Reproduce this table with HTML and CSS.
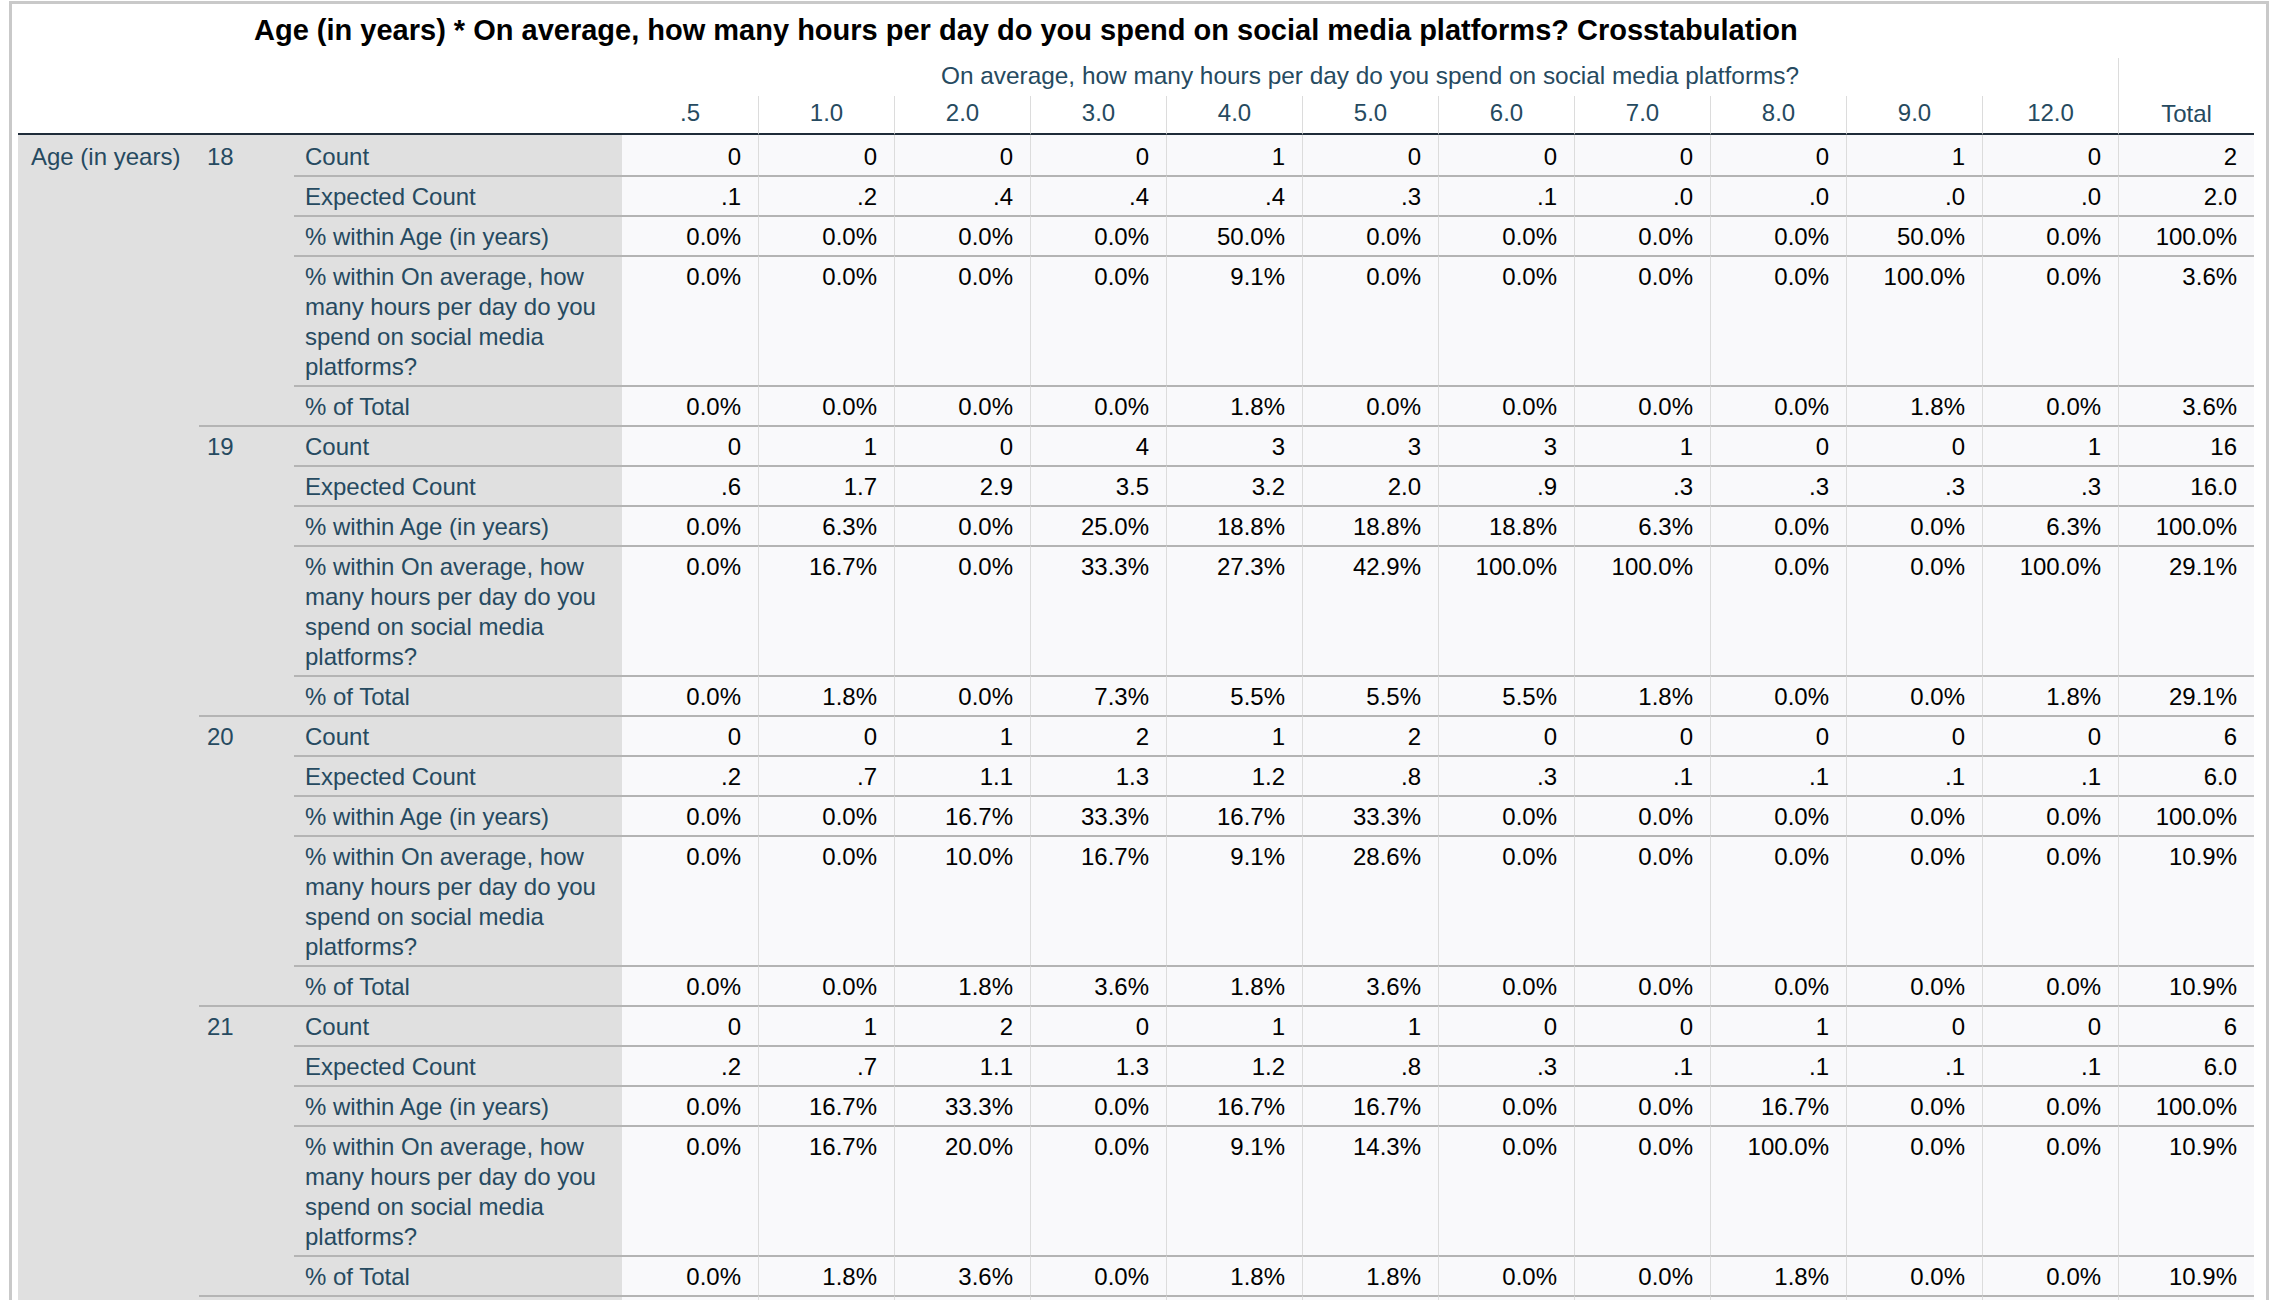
FILE: index.html
```html
<!DOCTYPE html>
<html lang="en">
<head>
<meta charset="utf-8">
<title>Crosstabulation</title>
<link rel="stylesheet" href="styles.css">
</head>
<body>
<div class="frame">
  <div class="title">Age (in years) * On average, how many hours per day do you spend on social media platforms? Crosstabulation</div>
  <table class="xt">
    <colgroup>
      <col class="c-var"><col class="c-age"><col class="c-stat">
      <col class="c-num"><col class="c-num"><col class="c-num"><col class="c-num"><col class="c-num"><col class="c-num">
      <col class="c-num"><col class="c-num"><col class="c-num"><col class="c-num"><col class="c-num"><col class="c-num">
    </colgroup>
    <thead>
      <tr class="h1">
        <th colspan="3" class="blank"></th>
        <th colspan="11" class="span">On average, how many hours per day do you spend on social media platforms?</th>
        <th rowspan="2" class="tot">Total</th>
      </tr>
      <tr class="h2">
        <th colspan="3" class="blank"></th>
        <th class="num">.5</th><th class="num">1.0</th><th class="num">2.0</th><th class="num">3.0</th><th class="num">4.0</th><th class="num">5.0</th>
        <th class="num">6.0</th><th class="num">7.0</th><th class="num">8.0</th><th class="num">9.0</th><th class="num">12.0</th>
      </tr>
    </thead>
    <tbody>
      <tr class="first">
        <th rowspan="21" class="var">Age (in years)</th>
        <th rowspan="5" class="age">18</th>
        <th class="stat">Count</th>
        <td>0</td><td>0</td><td>0</td><td>0</td><td>1</td><td>0</td><td>0</td><td>0</td><td>0</td><td>1</td><td>0</td><td>2</td>
      </tr>
      <tr>
        <th class="stat">Expected Count</th>
        <td>.1</td><td>.2</td><td>.4</td><td>.4</td><td>.4</td><td>.3</td><td>.1</td><td>.0</td><td>.0</td><td>.0</td><td>.0</td><td>2.0</td>
      </tr>
      <tr>
        <th class="stat">% within Age (in years)</th>
        <td>0.0%</td><td>0.0%</td><td>0.0%</td><td>0.0%</td><td>50.0%</td><td>0.0%</td><td>0.0%</td><td>0.0%</td><td>0.0%</td><td>50.0%</td><td>0.0%</td><td>100.0%</td>
      </tr>
      <tr>
        <th class="stat">% within On average, how many hours per day do you spend on social media platforms?</th>
        <td>0.0%</td><td>0.0%</td><td>0.0%</td><td>0.0%</td><td>9.1%</td><td>0.0%</td><td>0.0%</td><td>0.0%</td><td>0.0%</td><td>100.0%</td><td>0.0%</td><td>3.6%</td>
      </tr>
      <tr>
        <th class="stat">% of Total</th>
        <td>0.0%</td><td>0.0%</td><td>0.0%</td><td>0.0%</td><td>1.8%</td><td>0.0%</td><td>0.0%</td><td>0.0%</td><td>0.0%</td><td>1.8%</td><td>0.0%</td><td>3.6%</td>
      </tr>

      <tr>
        <th rowspan="5" class="age">19</th>
        <th class="stat">Count</th>
        <td>0</td><td>1</td><td>0</td><td>4</td><td>3</td><td>3</td><td>3</td><td>1</td><td>0</td><td>0</td><td>1</td><td>16</td>
      </tr>
      <tr>
        <th class="stat">Expected Count</th>
        <td>.6</td><td>1.7</td><td>2.9</td><td>3.5</td><td>3.2</td><td>2.0</td><td>.9</td><td>.3</td><td>.3</td><td>.3</td><td>.3</td><td>16.0</td>
      </tr>
      <tr>
        <th class="stat">% within Age (in years)</th>
        <td>0.0%</td><td>6.3%</td><td>0.0%</td><td>25.0%</td><td>18.8%</td><td>18.8%</td><td>18.8%</td><td>6.3%</td><td>0.0%</td><td>0.0%</td><td>6.3%</td><td>100.0%</td>
      </tr>
      <tr>
        <th class="stat">% within On average, how many hours per day do you spend on social media platforms?</th>
        <td>0.0%</td><td>16.7%</td><td>0.0%</td><td>33.3%</td><td>27.3%</td><td>42.9%</td><td>100.0%</td><td>100.0%</td><td>0.0%</td><td>0.0%</td><td>100.0%</td><td>29.1%</td>
      </tr>
      <tr>
        <th class="stat">% of Total</th>
        <td>0.0%</td><td>1.8%</td><td>0.0%</td><td>7.3%</td><td>5.5%</td><td>5.5%</td><td>5.5%</td><td>1.8%</td><td>0.0%</td><td>0.0%</td><td>1.8%</td><td>29.1%</td>
      </tr>

      <tr>
        <th rowspan="5" class="age">20</th>
        <th class="stat">Count</th>
        <td>0</td><td>0</td><td>1</td><td>2</td><td>1</td><td>2</td><td>0</td><td>0</td><td>0</td><td>0</td><td>0</td><td>6</td>
      </tr>
      <tr>
        <th class="stat">Expected Count</th>
        <td>.2</td><td>.7</td><td>1.1</td><td>1.3</td><td>1.2</td><td>.8</td><td>.3</td><td>.1</td><td>.1</td><td>.1</td><td>.1</td><td>6.0</td>
      </tr>
      <tr>
        <th class="stat">% within Age (in years)</th>
        <td>0.0%</td><td>0.0%</td><td>16.7%</td><td>33.3%</td><td>16.7%</td><td>33.3%</td><td>0.0%</td><td>0.0%</td><td>0.0%</td><td>0.0%</td><td>0.0%</td><td>100.0%</td>
      </tr>
      <tr>
        <th class="stat">% within On average, how many hours per day do you spend on social media platforms?</th>
        <td>0.0%</td><td>0.0%</td><td>10.0%</td><td>16.7%</td><td>9.1%</td><td>28.6%</td><td>0.0%</td><td>0.0%</td><td>0.0%</td><td>0.0%</td><td>0.0%</td><td>10.9%</td>
      </tr>
      <tr>
        <th class="stat">% of Total</th>
        <td>0.0%</td><td>0.0%</td><td>1.8%</td><td>3.6%</td><td>1.8%</td><td>3.6%</td><td>0.0%</td><td>0.0%</td><td>0.0%</td><td>0.0%</td><td>0.0%</td><td>10.9%</td>
      </tr>

      <tr>
        <th rowspan="5" class="age">21</th>
        <th class="stat">Count</th>
        <td>0</td><td>1</td><td>2</td><td>0</td><td>1</td><td>1</td><td>0</td><td>0</td><td>1</td><td>0</td><td>0</td><td>6</td>
      </tr>
      <tr>
        <th class="stat">Expected Count</th>
        <td>.2</td><td>.7</td><td>1.1</td><td>1.3</td><td>1.2</td><td>.8</td><td>.3</td><td>.1</td><td>.1</td><td>.1</td><td>.1</td><td>6.0</td>
      </tr>
      <tr>
        <th class="stat">% within Age (in years)</th>
        <td>0.0%</td><td>16.7%</td><td>33.3%</td><td>0.0%</td><td>16.7%</td><td>16.7%</td><td>0.0%</td><td>0.0%</td><td>16.7%</td><td>0.0%</td><td>0.0%</td><td>100.0%</td>
      </tr>
      <tr>
        <th class="stat">% within On average, how many hours per day do you spend on social media platforms?</th>
        <td>0.0%</td><td>16.7%</td><td>20.0%</td><td>0.0%</td><td>9.1%</td><td>14.3%</td><td>0.0%</td><td>0.0%</td><td>100.0%</td><td>0.0%</td><td>0.0%</td><td>10.9%</td>
      </tr>
      <tr>
        <th class="stat">% of Total</th>
        <td>0.0%</td><td>1.8%</td><td>3.6%</td><td>0.0%</td><td>1.8%</td><td>1.8%</td><td>0.0%</td><td>0.0%</td><td>1.8%</td><td>0.0%</td><td>0.0%</td><td>10.9%</td>
      </tr>

      <tr class="more">
        <th class="age">&nbsp;</th>
        <th class="stat">&nbsp;</th>
        <td>&nbsp;</td><td>&nbsp;</td><td>&nbsp;</td><td>&nbsp;</td><td>&nbsp;</td><td>&nbsp;</td><td>&nbsp;</td><td>&nbsp;</td><td>&nbsp;</td><td>&nbsp;</td><td>&nbsp;</td><td>&nbsp;</td>
      </tr>
    </tbody>
  </table>
</div>
</body>
</html>
```

FILE: styles.css
```css
html, body {
  margin: 0;
  padding: 0;
  background: #ffffff;
}

body {
  font-family: "Liberation Sans", Arial, sans-serif;
  color: #000000;
}

.frame {
  box-sizing: border-box;
  width: 2260px;
  margin: 1px 0 0 9px;
  padding: 0 0 0 6px;
  border: 3px solid #c9c9c9;
  border-bottom: 0;
  background: #ffffff;
}

.title {
  box-sizing: border-box;
  height: 54px;
  padding: 11px 0 0 236px;
  font-size: 29px;
  line-height: 30px;
  font-weight: bold;
  color: #000000;
  white-space: nowrap;
}

.xt {
  border-collapse: separate;
  border-spacing: 0;
  table-layout: fixed;
  width: 2236px;
  font-size: 24px;
  line-height: 30px;
}

.c-var { width: 181px; }
.c-age { width: 95px; }
.c-stat { width: 328px; }
.c-num { width: 136px; }

.xt th,
.xt td {
  padding: 0;
  font-weight: normal;
}

/* header */
.xt thead th {
  background: #ffffff;
  color: #264a60;
  text-align: center;
  white-space: nowrap;
}

.h1 th {
  padding: 3px 0 5px;
}

.xt thead .span {
  font-size: 24.4px;
}

.h2 th {
  padding: 2px 0 5px;
  border-bottom: 2px solid #1f2c39;
}

.h2 .num + .num {
  border-left: 1px solid #dcdcdc;
}

.xt thead .tot {
  vertical-align: bottom;
  padding: 0 0 4px;
  border-left: 1px solid #dcdcdc;
  border-bottom: 2px solid #1f2c39;
}

/* body */
.xt tbody th,
.xt tbody td {
  vertical-align: top;
  padding: 5px 17px 3px 0;
  border-top: 2px solid #b4b4b4;
}

.xt tbody th {
  background: #e0e0e0;
  color: #264a60;
  text-align: left;
}

.xt tbody td {
  background: #f9f9fb;
  color: #000000;
  text-align: right;
}

.xt tbody td + td {
  border-left: 1px solid #dcdcdc;
}

.xt tbody .var {
  border-top: 0;
  padding: 7px 0 0 13px;
  white-space: nowrap;
}

.xt tbody .age {
  padding-left: 8px;
  padding-right: 0;
}

.xt tbody .stat {
  padding-left: 11px;
  padding-right: 10px;
}

.xt tbody .first th,
.xt tbody .first td {
  border-top: 0;
  padding-top: 7px;
}
```
